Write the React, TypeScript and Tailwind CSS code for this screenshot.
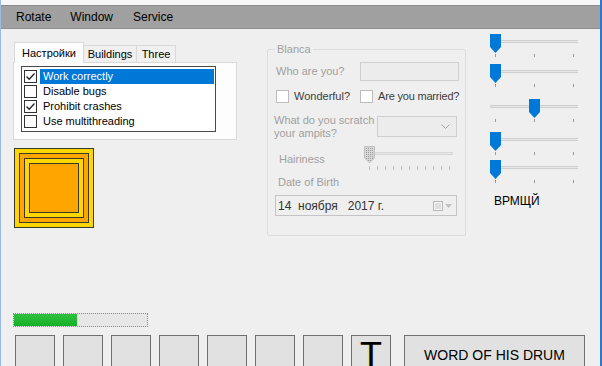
import React from "react";

const FONT = { fontFamily: '"Liberation Sans", Arial, sans-serif' };

const Check = ({ checked, dark = true }: { checked?: boolean; dark?: boolean }) => (
  <div
    className={`w-[13px] h-[13px] border bg-white flex items-center justify-center shrink-0 ${
      dark ? "border-[#333333]" : "border-[#bcbcbc] bg-[#f4f4f4]"
    }`}
  >
    {checked && (
      <svg width="11" height="11" viewBox="0 0 11 11">
        <path d="M1.5 5.5 L4.2 8.2 L9.5 2.5" fill="none" stroke="#222" strokeWidth="1.3" />
      </svg>
    )}
  </div>
);

const Thumb = () => (
  <svg width="11" height="19" viewBox="0 0 11 19">
    <path d="M0 0 H11 V13 L5.5 19 L0 13 Z" fill="#0078d7" />
  </svg>
);

const Slider = ({ pos, mt }: { pos: number; mt: string }) => (
  <div className={`relative w-[88px] h-[24px] ${mt}`}>
    <div className="absolute left-0 right-0 top-[6px] h-[3px] border-y border-[#cfcfcf] bg-[#e7e7e7]" />
    <div className="absolute top-0" style={{ left: pos }}>
      <Thumb />
    </div>
    <div className="absolute left-0 right-0 top-[20px] h-[3px]">
      <div className="absolute left-[5px] w-px h-[3px] bg-[#9a9a9a]" />
      <div className="absolute left-[44px] w-px h-[3px] bg-[#9a9a9a]" />
      <div className="absolute left-[83px] w-px h-[3px] bg-[#9a9a9a]" />
    </div>
  </div>
);

const items = [
  { label: "Work correctly", checked: true, sel: true },
  { label: "Disable bugs", checked: false },
  { label: "Prohibit crashes", checked: true },
  { label: "Use multithreading", checked: false },
];

export default function App() {
  return (
    <div
      className="w-[602px] h-[366px] overflow-hidden bg-[#efefef] border-l border-l-[#9bbbe0] border-r-2 border-r-[#2b78d0] text-[11px] text-black flex flex-col"
      style={FONT}
    >
      {/* top strip + menu */}
      <div className="h-[5px] bg-[#f7f7f7] shrink-0" />
      <div className="h-[24px] bg-[#a0a0a0] border-t border-[#8a8a8a] border-b border-b-[#8f8f8f] flex items-center text-[12px] text-black shrink-0">
        <span className="ml-[15px]">Rotate</span>
        <span className="ml-[19px]">Window</span>
        <span className="ml-[20px]">Service</span>
      </div>

      {/* top row */}
      <div className="h-[284px] flex shrink-0">
        {/* left column */}
        <div className="ml-[12px] w-[224px] flex flex-col">
          <div className="mt-[13px] h-[20px] flex items-end pl-px">
            <div className="w-[70px] h-[21px] bg-[#fdfdfd] border border-b-0 border-[#d9d9d9] flex items-center justify-center relative z-10 -mb-px">
              Настройки
            </div>
            <div className="w-[53px] h-[17px] bg-[#f0f0f0] border border-b-0 border-l-0 border-[#d9d9d9] flex items-center justify-center">
              Buildings
            </div>
            <div className="w-[39px] h-[17px] bg-[#f0f0f0] border border-b-0 border-l-0 border-[#d9d9d9] flex items-center justify-center">
              Three
            </div>
          </div>
          <div className="h-[78px] bg-[#fdfdfd] border border-[#d9d9d9] pt-[3px] pl-[7px]">
            <div className="w-[195px] h-[66px] bg-white border border-[#4a4a4a] pt-[2px] pl-[2px]">
              {items.map((it) => (
                <div key={it.label} className="h-[15px] flex items-center">
                  <Check checked={it.checked} />
                  <div
                    className={`ml-[3px] w-[174px] h-[15px] flex items-center pl-[3px] ${
                      it.sel ? "bg-[#0078d7] text-white" : ""
                    }`}
                  >
                    {it.label}
                  </div>
                </div>
              ))}
            </div>
          </div>

          {/* nested squares */}
          <div className="mt-[8px] ml-px w-[80px] h-[80px] border border-[#3a3a2a] bg-[#ffd700] p-[4px]">
            <div className="w-full h-full border border-[#3a3a2a] bg-[#ffa500] p-[4px]">
              <div className="w-full h-full border border-[#3a3a2a] bg-[#ffd700] p-[4px]">
                <div className="w-full h-full border border-[#3a3a2a] bg-[#ffa500]" />
              </div>
            </div>
          </div>
        </div>

        {/* group box */}
        <div className="ml-[30px] mt-[20px] w-[199px] h-[187px] border border-[#dcdcdc] rounded-[2px] flex flex-col text-[#a0a0a0]">
          <span className="-mt-[7px] ml-[7px] px-[2px] bg-[#efefef] self-start leading-[13px]">Blanca</span>
          <div className="mt-[6px] flex items-center">
            <span className="ml-[8px] w-[84px]">Who are you?</span>
            <div className="w-[99px] h-[19px] border border-[#cfcfcf] bg-[#ececec]" />
          </div>
          <div className="mt-[7px] flex items-center text-[#3c3c3c]">
            <div className="ml-[8px]">
              <Check dark={false} />
            </div>
            <span className="ml-[5px]">Wonderful?</span>
            <div className="ml-[10px]">
              <Check dark={false} />
            </div>
            <span className="ml-[5px] tracking-[-0.2px]">Are you married?</span>
          </div>
          <div className="mt-[9px] flex items-center">
            <span className="ml-[6px] w-[103px] leading-[13px]">
              What do you scratch
              <br />
              your ampits?
            </span>
            <div className="w-[80px] h-[21px] border border-[#cfcfcf] bg-[#ececec] flex items-center justify-end pr-[6px]">
              <svg width="9" height="6" viewBox="0 0 9 6">
                <path d="M0.5 0.5 L4.5 4.5 L8.5 0.5" fill="none" stroke="#a8a8a8" strokeWidth="1" />
              </svg>
            </div>
          </div>
          <div className="mt-[6px] flex">
            <span className="ml-[11px] mt-[5px] w-[85px]">Hairiness</span>
            <div className="relative w-[90px] h-[26px]">
              <div className="absolute left-[8px] right-[1px] top-[6px] h-[3px] border-y border-[#d6d6d6] bg-[#e9e9e9]" />
              <svg className="absolute left-0 top-0" width="11" height="18" viewBox="0 0 11 18">
                <defs>
                  <pattern id="dots" width="2" height="2" patternUnits="userSpaceOnUse">
                    <rect width="1" height="1" fill="#9a9a9a" />
                  </pattern>
                </defs>
                <path d="M0.5 0.5 H10.5 V12 L5.5 17 L0.5 12 Z" fill="#d8d8d8" stroke="#c0c0c0" />
                <path d="M1 1 H10 V12 L5.5 16.5 L1 12 Z" fill="url(#dots)" />
              </svg>
              <div className="absolute left-[5px] top-[20px] flex gap-[7px]">
                {Array.from({ length: 11 }).map((_, i) => (
                  <div key={i} className="w-px h-[4px] bg-[#c0c0c0]" />
                ))}
              </div>
            </div>
          </div>
          <span className="ml-[10px] mt-[2px]">Date of Birth</span>
          <div className="ml-[7px] mt-[5px] w-[182px] h-[21px] border border-[#c4c4c4] bg-[#efefef] flex items-center text-[12px] text-[#333]">
            <span className="ml-[2px] whitespace-pre">14  ноября   2017 г.</span>
            <div className="ml-auto mr-[4px] flex items-center gap-[2px]">
              <svg width="10" height="11" viewBox="0 0 10 11">
                <rect x="0.5" y="1.5" width="9" height="9" fill="#f4f4f4" stroke="#b8b8b8" />
                <path d="M2 4 H8 M2 6 H8 M2 8 H8" stroke="#c8c8c8" />
              </svg>
              <svg width="7" height="4" viewBox="0 0 7 4">
                <path d="M0 0 H7 L3.5 4 Z" fill="#c0c0c0" />
              </svg>
            </div>
          </div>
        </div>

        {/* sliders */}
        <div className="ml-[24px] flex flex-col">
          <Slider pos={0} mt="mt-[5px]" />
          <Slider pos={0} mt="mt-[6px]" />
          <Slider pos={39} mt="mt-[11px]" />
          <Slider pos={0} mt="mt-[9px]" />
          <Slider pos={0} mt="mt-[4px]" />
          <span className="ml-[4px] mt-[8px] text-[12px] text-black">ВРМЩЙ</span>
        </div>
      </div>

      {/* progress */}
      <div className="ml-[12px] w-[135px] h-[14px] border border-dotted border-[#8a8a8a] bg-[#e6e6e6] shrink-0">
        <div className="w-[63px] h-full bg-gradient-to-b from-[#2fc13e] to-[#13b027]" />
      </div>

      {/* buttons */}
      <div className="mt-[8px] ml-[14px] flex shrink-0">
        {Array.from({ length: 7 }).map((_, i) => (
          <div key={i} className="w-[40px] h-[40px] mr-[8px] border border-[#707070] bg-[#e1e1e1]" />
        ))}
        <div className="w-[40px] h-[40px] border border-[#707070] bg-[#e1e1e1] flex justify-center overflow-hidden">
          <span className="text-[36px] leading-none mt-[2px] text-black [text-shadow:-1px_0_0_#e8d9a0]">
            T
          </span>
        </div>
        <div className="ml-[13px] w-[181px] h-[40px] border border-[#707070] bg-[#e1e1e1] flex justify-center pt-[9px] text-[14px] text-black">
          WORD OF HIS DRUM
        </div>
      </div>
    </div>
  );
}
